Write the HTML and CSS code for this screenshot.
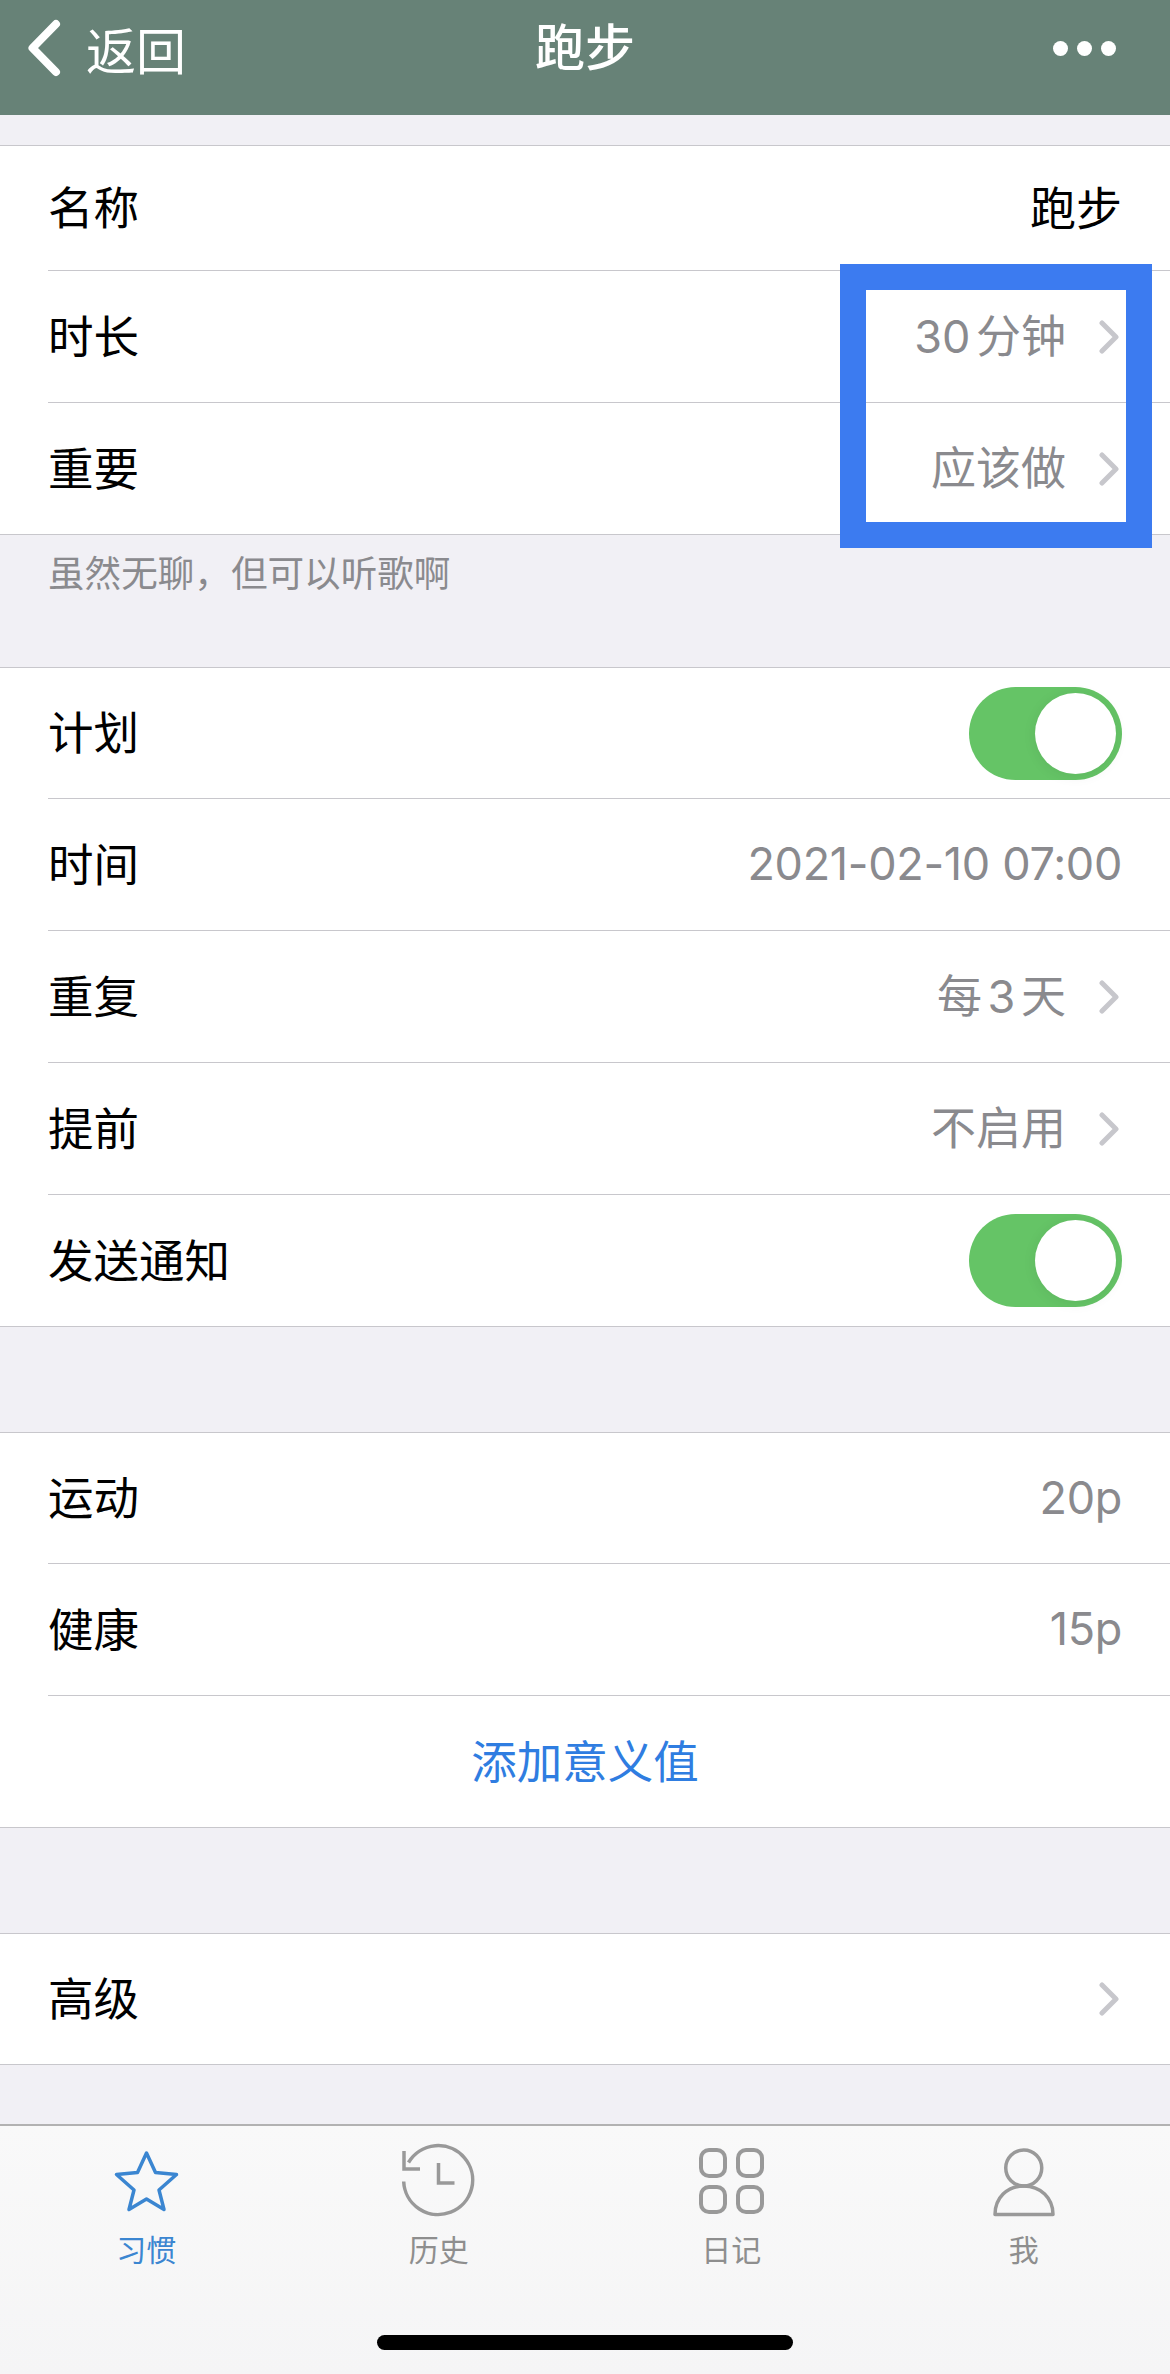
FILE: index.html
```html
<!doctype html>
<html lang="zh-CN">
<head>
    <meta charset="UTF-8">
    <title>跑步</title>
    <link rel="stylesheet" href="styles.css">
</head>
<body>
<div class="app">
    <div class="nav">
        <div class="nav_left">
            <svg class="nav_back" width="36" height="58" viewBox="0 0 36 58"><path d="M29 5 L5.5 29 L29 53" fill="none" stroke="#fff" stroke-width="8" stroke-linecap="round" stroke-linejoin="round"/></svg>
            <span>返回</span>
        </div>
        <div class="nav_title">跑步</div>
        <div class="nav_more"><i></i><i></i><i></i></div>
    </div>

    <div class="main">
        <div class="group">
            <div class="row row_short"><span class="label">名称</span><span class="value value_dark">跑步</span></div>
            <div class="row"><span class="label">时长</span><span class="value">30 分钟</span><svg class="arrow" width="20" height="34" viewBox="0 0 20 34"><path d="M3 3 L17 17 L3 31" fill="none" stroke="#c7c7cc" stroke-width="5" stroke-linecap="round" stroke-linejoin="round"/></svg></div>
            <div class="row"><span class="label">重要</span><span class="value">应该做</span><svg class="arrow" width="20" height="34" viewBox="0 0 20 34"><path d="M3 3 L17 17 L3 31" fill="none" stroke="#c7c7cc" stroke-width="5" stroke-linecap="round" stroke-linejoin="round"/></svg></div>
        </div>
        <div class="note">虽然无聊，但可以听歌啊</div>

        <div class="group">
            <div class="row"><span class="label">计划</span><div class="switch"><div class="knob"></div></div></div>
            <div class="row"><span class="label">时间</span><span class="value value_end">2021-02-10 07:00</span></div>
            <div class="row"><span class="label">重复</span><span class="value">每 3 天</span><svg class="arrow" width="20" height="34" viewBox="0 0 20 34"><path d="M3 3 L17 17 L3 31" fill="none" stroke="#c7c7cc" stroke-width="5" stroke-linecap="round" stroke-linejoin="round"/></svg></div>
            <div class="row"><span class="label">提前</span><span class="value">不启用</span><svg class="arrow" width="20" height="34" viewBox="0 0 20 34"><path d="M3 3 L17 17 L3 31" fill="none" stroke="#c7c7cc" stroke-width="5" stroke-linecap="round" stroke-linejoin="round"/></svg></div>
            <div class="row"><span class="label">发送通知</span><div class="switch"><div class="knob"></div></div></div>
        </div>

        <div class="group group_gap">
            <div class="row"><span class="label">运动</span><span class="value value_end">20p</span></div>
            <div class="row"><span class="label">健康</span><span class="value value_end">15p</span></div>
            <div class="row row_link"><span class="link">添加意义值</span></div>
        </div>

        <div class="group group_gap">
            <div class="row"><span class="label">高级</span><svg class="arrow" width="20" height="34" viewBox="0 0 20 34"><path d="M3 3 L17 17 L3 31" fill="none" stroke="#c7c7cc" stroke-width="5" stroke-linecap="round" stroke-linejoin="round"/></svg></div>
        </div>
    </div>

    <div class="tabbar">
        <div class="tabs">
            <div class="tab tab_on">
                <svg width="80" height="80" viewBox="0 0 80 80"><path d="M40.5 13 L49.5 32.5 L70.5 34.5 L53 50 L58 69.5 L40.5 59 L23 69.5 L28 50 L10.5 34.5 L31.5 32.5 Z" fill="none" stroke="#3b86d1" stroke-width="3.5" stroke-linejoin="round"/></svg>
                <span>习惯</span>
            </div>
            <div class="tab">
                <svg width="80" height="80" viewBox="0 0 80 80"><g fill="none" stroke="#999" stroke-width="3.5"><path d="M4.7 41.5 A34.5 34.5 0 1 0 9.5 22.5"/><path d="M5 11 V29 H21"/><path d="M39.5 23 V43 H55.5"/></g></svg>
                <span>历史</span>
            </div>
            <div class="tab">
                <svg width="80" height="80" viewBox="0 0 80 80"><g fill="none" stroke="#999" stroke-width="4"><rect x="10" y="10" width="24" height="26" rx="8"/><rect x="47" y="10" width="24" height="26" rx="8"/><rect x="10" y="47" width="24" height="25" rx="8"/><rect x="47" y="47" width="24" height="25" rx="8"/></g></svg>
                <span>日记</span>
            </div>
            <div class="tab">
                <svg width="80" height="80" viewBox="0 0 80 80"><g fill="none" stroke="#999" stroke-width="3.5"><circle cx="39.75" cy="28" r="18"/><path d="M11 74.5 C11 58 23 46 39.75 46 C56.5 46 69 58 69 74.5 Z" stroke-linejoin="round"/></g></svg>
                <span>我</span>
            </div>
        </div>
        <div class="home_bar"></div>
    </div>

    <!-- 标注框 -->
    <div class="mark"></div>
</div>
</body>
</html>
```

FILE: styles.css
```css
body {
    margin: 0;
}

.app {
    position: relative;
    display: flex;
    flex-direction: column;
    width: 1170px;
    height: 2374px;
    overflow: hidden;
    background: #f1f0f5;
    font-family: "Inter", "Noto Sans CJK SC", sans-serif;
    font-size: 45px;
    color: #000;
}

.nav {
    display: flex;
    align-items: center;
    justify-content: space-between;
    box-sizing: border-box;
    height: 115px;
    padding: 0 54px 19px 27px;
    background: #678277;
    color: #fff;
    font-size: 50px;
    position: relative;
}

.nav_left {
    display: flex;
    align-items: center;
    gap: 23px;
}

.nav_back {
    display: block;
}

.nav_title {
    position: absolute;
    left: 0;
    right: 0;
    top: 19px;
    text-align: center;
    font-weight: 500;
    line-height: 58px;
}

.nav_more {
    display: flex;
    gap: 9px;
}

.nav_more i {
    width: 15px;
    height: 15px;
    border-radius: 50%;
    background: #fff;
}

.main {
    flex: 1;
    padding-top: 30px;
}

.group {
    background: #fff;
    border-top: 1px solid #c8c7cc;
    border-bottom: 1px solid #c8c7cc;
}

.group_gap {
    margin-top: 105px;
}

.row {
    display: flex;
    align-items: center;
    box-sizing: border-box;
    height: 132px;
    margin-left: 48px;
    padding-right: 48px;
    border-top: 1px solid #c8c7cc;
}

.row:first-child {
    height: 130px;
    border-top: 0;
}

.row:first-child.row_short {
    height: 124px;
}

.label {
    flex: 1;
    font-size: 45.5px;
    padding-bottom: 6px;
}

.value {
    color: #8a8a8e;
    margin-right: 33px;
    padding-bottom: 6px;
    word-spacing: -7px;
}

.value_dark {
    color: #000;
    margin-right: 0;
    font-size: 46px;
}

.value_end {
    margin-right: 0;
    padding-bottom: 2px;
    letter-spacing: -0.3px;
    word-spacing: 0;
}

.arrow {
    display: block;
    margin-right: 3px;
}

.row_link {
    justify-content: center;
}

.link {
    color: #2f7de1;
    font-size: 45.5px;
    padding-bottom: 6px;
}

.note {
    height: 132px;
    box-sizing: border-box;
    padding: 14px 48px 0;
    font-size: 36.6px;
    line-height: 50px;
    color: #8a8a8e;
}

.switch {
    box-sizing: border-box;
    width: 153px;
    height: 93px;
    padding: 6px;
    border-radius: 47px;
    background: #65c466;
    display: flex;
    justify-content: flex-end;
}

.knob {
    width: 81px;
    height: 81px;
    border-radius: 50%;
    background: #fff;
    box-shadow: 0 2px 14px rgba(0, 0, 0, 0.07);
}

.tabbar {
    box-sizing: border-box;
    height: 250px;
    border-top: 2px solid #b2b2b2;
    background: linear-gradient(#f9f9f9, #f5f5f6);
    display: flex;
    flex-direction: column;
    align-items: center;
}

.tabs {
    display: grid;
    grid-template-columns: repeat(4, 1fr);
    width: 100%;
    padding-top: 14px;
}

.tab {
    display: flex;
    flex-direction: column;
    align-items: center;
    font-size: 30px;
    line-height: 44px;
    color: #8e8e8e;
}

.tab svg {
    display: block;
    margin-bottom: 8px;
}

.tab_on {
    color: #3b86d1;
}

.home_bar {
    width: 416px;
    height: 15px;
    margin-top: 63px;
    border-radius: 8px;
    background: #000;
}

.mark {
    position: absolute;
    left: 840px;
    top: 264px;
    box-sizing: border-box;
    width: 312px;
    height: 284px;
    border: 26px solid #3c7bf0;
}
```
